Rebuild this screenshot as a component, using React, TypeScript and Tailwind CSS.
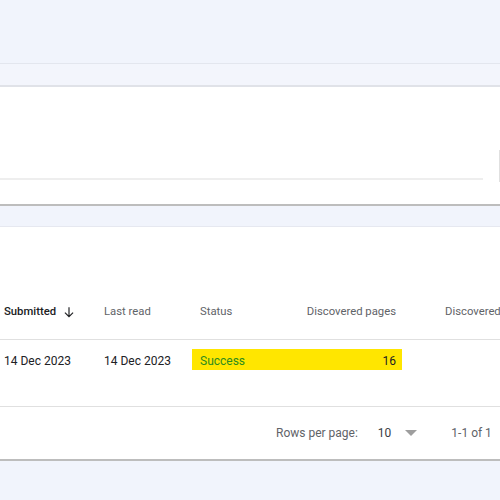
import React from "react";

export default function App() {
  return (
    <div className="w-[500px] h-[500px] overflow-hidden bg-[#f1f4fc]" style={{ fontFamily: "Roboto, 'Liberation Sans', sans-serif" }}>
      <div className="h-[63px]" />
      <div className="h-[24px] border-t border-[#e3e6ee] border-b-2 border-b-[#e0e2e8] bg-[#f3f5fc]" />
      <div className="bg-white h-[119px] border-b-2 border-[#bdbdbd] flex flex-col">
        <div className="h-[63px] shrink-0" />
        <div className="flex h-[30px] items-start shrink-0">
          <div className="flex-1 h-[30px] border-b-2 border-[#eeeeee] mr-[16px]" />
          <div className="w-[1px] h-[32px] bg-[#e0e0e0]" />
        </div>
      </div>
      <div className="h-[21px] border-b border-[#e6e8f0]" />
      <div className="bg-white h-[234px] border-b-2 border-[#bdbdbd] flex flex-col text-[12px]">
        <div className="h-[58px] shrink-0" />
        <div className="flex items-center h-[55px] shrink-0 border-b border-[#e0e0e0] whitespace-nowrap text-[11.3px]">
          <div className="w-[104px] shrink-0 pl-[4px] flex items-center text-[#202124] font-medium">
            Submitted
            <svg className="ml-[6px]" width="14" height="14" viewBox="0 0 24 24" fill="none" stroke="#202124" strokeWidth="2">
              <path d="M12 4v16M5 13l7 7 7-7" />
            </svg>
          </div>
          <div className="w-[88px] shrink-0 text-[#5f6368]">Last read</div>
          <div className="w-[210px] shrink-0 pl-[8px] pr-[6px] flex text-[#5f6368]">
            <span className="flex-1">Status</span>
            <span>Discovered pages</span>
          </div>
          <div className="pl-[43px] shrink-0 text-[#5f6368]">Discovered videos</div>
        </div>
        <div className="flex items-start pt-[9px] h-[67px] shrink-0 border-b border-[#e0e0e0] whitespace-nowrap">
          <div className="w-[104px] shrink-0 pl-[4px] pt-[2px] h-[21px] flex items-center text-[#202124]">14 Dec 2023</div>
          <div className="w-[88px] shrink-0 pt-[2px] h-[21px] flex items-center text-[#202124]">14 Dec 2023</div>
          <div className="w-[210px] shrink-0 h-[21px] pt-[2px] bg-[#ffe600] flex items-center pl-[8px] pr-[6px]">
            <span className="flex-1 text-[#2e8b1e]">Success</span>
            <span className="text-[#202124]">16</span>
          </div>
        </div>
        <div className="flex items-center h-[52px] shrink-0 text-[#5f6368] whitespace-nowrap">
          <div className="pl-[276px]">Rows per page:</div>
          <div className="pl-[20px] text-[#3c4043]">10</div>
          <svg className="ml-[14px]" width="12" height="8" viewBox="0 0 10 5">
            <path d="M0 0l5 5 5-5z" fill="#9e9e9e" />
          </svg>
          <div className="pl-[34px]">1-1 of 1</div>
        </div>
      </div>
    </div>
  );
}
